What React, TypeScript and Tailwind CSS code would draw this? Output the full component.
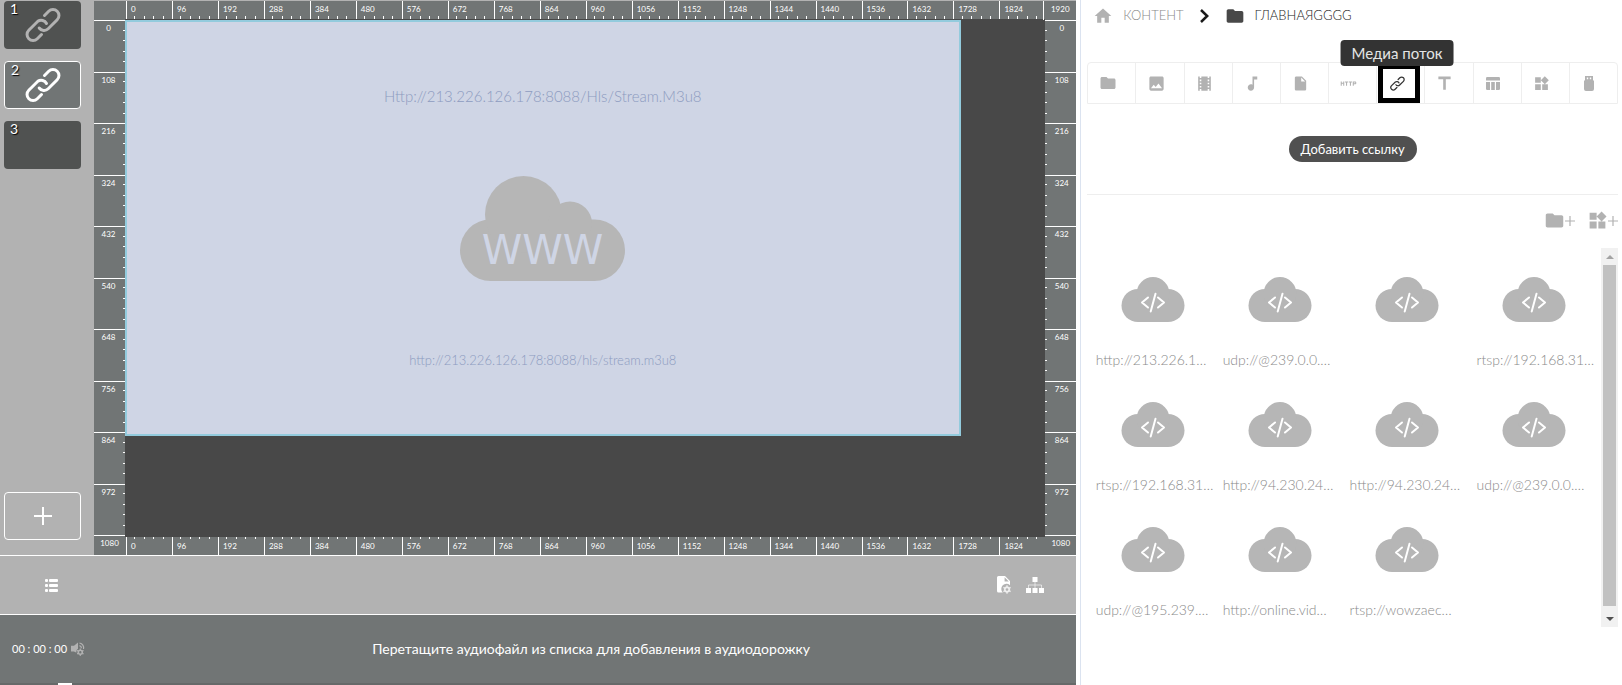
import { useState } from "react";
import type { ReactNode } from "react";
import clsx from "clsx";
import {
  MdFolder,
  MdHome,
  MdHttp,
  MdImage,
  MdInsertDriveFile,
  MdMusicNote,
  MdTheaters,
  MdTitle,
  MdWidgets,
} from "react-icons/md";

const H_MARKS = Array.from({ length: 20 }, (_, i) => i * 96);
const V_MARKS = Array.from({ length: 10 }, (_, i) => i * 108);

const LINKS = [
  "http://213.226.1…",
  "udp://@239.0.0.…",
  "",
  "rtsp://192.168.31…",
  "rtsp://192.168.31…",
  "http://94.230.24…",
  "http://94.230.24…",
  "udp://@239.0.0.…",
  "udp://@195.239.…",
  "http://online.vid…",
  "rtsp://wowzaec…",
];

function ChainIcon({ className }: { className?: string }) {
  return (
    <svg viewBox="0 0 36 36" className={className} fill="none" stroke="currentColor" strokeWidth="3" strokeLinecap="round">
      <path d="M19.5 8.5l4.2-4.2a6 6 0 0 1 8.5 8.5L23.2 21.7a6 6 0 0 1-9-.7" />
      <path d="M16.5 27.5l-4.2 4.2a6 6 0 0 1-8.5-8.5L12.8 14.3a6 6 0 0 1 8.7 2.2" />
    </svg>
  );
}

function TableIcon() {
  return (
    <svg viewBox="0 0 14 13" className="w-3.5" fill="currentColor">
      <path d="M1.2 0h11.6q1.2 0 1.2 1.2V3.6H0V1.2Q0 0 1.2 0z" />
      <path d="M0 5h4v8H1.2Q0 13 0 11.8zM5.2 5h3.6v8H5.2zM10 5h4v6.8q0 1.2-1.2 1.2H10z" />
    </svg>
  );
}

function UsbIcon() {
  return (
    <svg viewBox="0 0 10 15" className="w-2.5" fill="currentColor">
      <path fillRule="evenodd" d="M1 0h8v4.5h1V13q0 2-2 2H2q-2 0-2-2V4.5h1zM2.8 1.5v1.7h1.4V1.5zM5.8 1.5v1.7h1.4V1.5z" />
    </svg>
  );
}

function ListIcon() {
  return (
    <svg viewBox="0 0 13 13" className="w-[13px]" fill="currentColor">
      {[0, 5, 10].map((y) => (
        <g key={y}>
          <rect x="0" y={y} width="3" height="3" rx="1" />
          <rect x="4" y={y} width="9" height="3" rx="1" />
        </g>
      ))}
    </svg>
  );
}

function Gear({ x, y, r }: { x: number; y: number; r: number }) {
  return (
    <g transform={`translate(${x} ${y})`}>
      <circle r={r * 0.62} fill="none" stroke="currentColor" strokeWidth={r * 0.5} />
      {[0, 60, 120, 180, 240, 300].map((a) => (
        <rect key={a} x={-r * 0.2} y={-r * 1.15} width={r * 0.4} height={r * 0.4} fill="currentColor" transform={`rotate(${a})`} />
      ))}
    </g>
  );
}

function FileGearIcon() {
  return (
    <svg viewBox="0 0 15 18" className="w-[15px]">
      <path fill="currentColor" d="M1.5 0H8l5 5v4.2a5 5 0 0 0-7.2 7.3H1.5Q0 16.5 0 15V1.5Q0 0 1.5 0zM7.6 1.3V5.5h4.2z" />
      <g className="opacity-80">
        <Gear x={10} y={13.5} r={3.6} />
      </g>
    </svg>
  );
}

function SitemapIcon() {
  return (
    <svg viewBox="0 0 18 16" className="w-[18px]" fill="currentColor">
      <path d="M6.5 0h5v5h-5zM0 11h5v5H0zM6.5 11h5v5h-5zM13 11h5v5h-5z" />
      <path d="M9 5v6M2.5 11V8h13v3" fill="none" stroke="currentColor" strokeOpacity="0.6" />
    </svg>
  );
}

function VolumeGearIcon() {
  return (
    <svg viewBox="0 0 14 14" className="w-3.5">
      <path fill="currentColor" d="M0 3.8h3L7 0.5v11L3 9.5H0z" />
      <path d="M8.5 1c3 .6 4.6 3 4 6M8.5 3.6c1.5.4 2 1.6 2 2.8" fill="none" stroke="currentColor" strokeWidth="1.2" />
      <circle cx="9.3" cy="10.2" r="4" fill="#717575" />
      <Gear x={9.3} y={10.2} r={3.2} />
    </svg>
  );
}

function CodeCloud() {
  return (
    <svg viewBox="0 0 64 45" className="w-16 text-[#b6b6b6]" fill="currentColor">
      <rect x="0.5" y="12" width="63" height="33" rx="16.5" />
      <circle cx="32" cy="16.5" r="16.4" />
      <path
        d="M27 20.5l-6 5 6 5M37 20.5l6 5-6 5M34.5 16.8L29.7 34.5"
        fill="none"
        stroke="white"
        strokeWidth="2"
        strokeLinecap="round"
        strokeLinejoin="round"
      />
    </svg>
  );
}

function WwwCloud() {
  return (
    <svg viewBox="0 0 165 105" className="w-[165px] shrink-0 text-[#b6b6b6]" fill="currentColor">
      <rect x="0" y="43.5" width="165" height="61.5" rx="30.7" />
      <circle cx="63.5" cy="38.5" r="38.5" />
      <circle cx="110" cy="47.5" r="22" />
      <text x="82.5" y="88" textAnchor="middle" fontSize="41" fill="#cfd5e5" fontFamily="DejaVu Sans, sans-serif">
        WWW
      </text>
    </svg>
  );
}

function HRuler({ flip = false }: { flip?: boolean }) {
  return (
    <div className="flex h-[18px] w-full shrink-0 pl-px">
      {H_MARKS.map((m) => (
        <div
          key={m}
          className={clsx("flex min-w-0 flex-1 border-l border-white", flip ? "flex-col-reverse justify-end" : "flex-col justify-between")}
        >
          <span className={clsx("pl-1 text-[8px]", flip ? "leading-[12px]" : "pt-px leading-[14px]")}>{m}</span>
          <div className="-ml-px flex h-[3px] shrink-0">
            {[0, 1, 2, 3, 4].map((t) => (
              <i key={t} className={clsx("flex-1", t > 0 && "border-l border-white", flip && "mb-px")} />
            ))}
          </div>
        </div>
      ))}
    </div>
  );
}

function VRuler({ flip = false }: { flip?: boolean }) {
  return (
    <div className="flex w-[31px] shrink-0 flex-col bg-[#717575] text-center text-[8px]">
      <div className={clsx("h-[19px] shrink-0 leading-[17px]", flip && "-ml-0.5 border-l border-white")}>{flip && 1920}</div>
      {V_MARKS.map((m) => (
        <div key={m} className={clsx("flex min-h-0 flex-1 border-t border-white", flip && "flex-row-reverse")}>
          <span className="flex-1 leading-[14px]">{m}</span>
          <div className="-mt-px flex w-0.5 flex-col">
            {[0, 1, 2, 3, 4].map((t) => (
              <i key={t} className={clsx("flex-1", t > 0 && "border-t border-white")} />
            ))}
          </div>
        </div>
      ))}
      <div className="h-5 shrink-0 border-t border-white leading-[14px]">1080</div>
    </div>
  );
}

function Slides() {
  const [active, setActive] = useState(2);
  return (
    <aside className="flex w-[94px] shrink-0 flex-col gap-3 pt-px pb-[15px] pl-1">
      {[1, 2, 3].map((n) => (
        <button
          key={n}
          type="button"
          onClick={() => setActive(n)}
          className={clsx(
            "relative flex h-12 w-[77px] items-center justify-center rounded",
            n === active ? "border border-white bg-[#717575] text-white" : "bg-[#505251] text-[#b2b2b2]"
          )}
        >
          <span className="absolute top-0 left-1.5 text-sm leading-4 text-white [text-shadow:1px_1px_1px_black]">{n}</span>
          {n < 3 && <ChainIcon className="size-9" />}
        </button>
      ))}
      <button
        type="button"
        aria-label="Добавить слайд"
        className="mt-auto flex h-12 w-[77px] items-center justify-center rounded border border-white"
      >
        <svg viewBox="0 0 18 18" className="size-[18px]" stroke="white" strokeWidth="2">
          <path d="M9 0v18M0 9h18" />
        </svg>
      </button>
    </aside>
  );
}

function Workspace() {
  return (
    <div className="flex min-w-0 flex-1 pt-px text-white">
      <VRuler />
      <div className="flex min-w-0 flex-1 flex-col bg-[#717575]">
        <HRuler />
        <div className="min-h-0 flex-1 bg-[#484848] pt-px">
          <div className="flex h-[80.5%] w-[90.8%] flex-col items-center justify-between border-2 border-[#93cbdd] bg-[#cfd5e5] py-16 text-[#8d9bc0]">
            <p className="text-[15px] leading-5 font-light">Http://213.226.126.178:8088/Hls/Stream.M3u8</p>
            <WwwCloud />
            <p className="text-[13px] leading-5 font-light">http://213.226.126.178:8088/hls/stream.m3u8</p>
          </div>
        </div>
        <HRuler flip />
      </div>
      <VRuler flip />
    </div>
  );
}

const TOOLS: { name: string; icon: ReactNode }[] = [
  { name: "Папки", icon: <MdFolder className="size-[18px]" /> },
  { name: "Изображения", icon: <MdImage className="size-[19px]" /> },
  { name: "Видео", icon: <MdTheaters className="size-[19px]" /> },
  { name: "Аудио", icon: <MdMusicNote className="size-[19px]" /> },
  { name: "Документы", icon: <MdInsertDriveFile className="size-[17px]" /> },
  { name: "HTTP", icon: <MdHttp className="size-[17px]" /> },
  { name: "Медиа поток", icon: <ChainIcon className="size-[15px]" /> },
  { name: "Текст", icon: <MdTitle className="size-[21px]" /> },
  { name: "Таблица", icon: <TableIcon /> },
  { name: "Виджеты", icon: <MdWidgets className="size-[17px]" /> },
  { name: "USB", icon: <UsbIcon /> },
];

function ContentPanel() {
  const [tool, setTool] = useState(6);
  return (
    <section className="w-[33.4%] shrink-0 border-l border-[#dbe3f0] bg-white pr-1 pl-1.5 text-[#b2b2b2]">
      <nav className="flex h-[31px] items-center text-[13px] font-light">
        <a href="#root" className="flex items-center gap-2.5 pl-1.5">
          <MdHome className="size-5" />
          <span className="text-[#8a8a8a]">КОНТЕНТ</span>
        </a>
        <svg viewBox="0 0 9 14" className="mx-4 w-[9px]" fill="none" stroke="#1a1a1a" strokeWidth="2.5">
          <path d="M1 1l6.2 6L1 13" />
        </svg>
        <a href="#main" className="flex items-center gap-2.5 text-[#484848]">
          <MdFolder className="size-5" />
          <span className="text-[#222222]">ГЛАВНАЯGGGG</span>
        </a>
      </nav>

      <ul className="mt-[31px] flex h-[42px] rounded-t border border-[#eeeeee]">
        {TOOLS.map((t, i) => (
          <li key={t.name} className={clsx("relative flex-1", i > 0 && "border-l border-[#eeeeee]")}>
            <button
              type="button"
              aria-label={t.name}
              onClick={() => setTool(i)}
              className={clsx(
                "flex items-center justify-center",
                i === tool ? "mt-px ml-px h-[39px] w-[42px] border-[5px] border-black pr-1 text-[#333333]" : "size-full pr-2"
              )}
            >
              {t.icon}
            </button>
            {i === tool && (
              <span className="absolute -top-[23px] left-[42%] z-10 -translate-x-1/2 rounded bg-[#333333] px-[11px] text-[15px] leading-[26px] whitespace-nowrap text-[#e5e5e5]">
                {t.name}
              </span>
            )}
          </li>
        ))}
      </ul>

      <div className="flex justify-center border-b border-[#eeeeee] py-8">
        <button type="button" className="rounded-full bg-[#505050] px-3 text-[13px] leading-[26px] text-white">
          Добавить ссылку
        </button>
      </div>

      <div className="flex h-[53px] items-center justify-end gap-3 pb-0.5">
        <button type="button" aria-label="Новая папка" className="flex items-center">
          <MdFolder className="size-[21px]" />
          <PlusMark />
        </button>
        <button type="button" aria-label="Новый виджет" className="flex items-center">
          <MdWidgets className="size-[21px]" />
          <PlusMark />
        </button>
      </div>

      <div className="flex h-[379px]">
        <div className="grid flex-1 auto-rows-[125px] grid-cols-4 overflow-hidden pr-1 pl-0.5">
          {LINKS.map((link, i) => (
            <a key={i} href="#link" className="flex min-w-0 flex-col items-center pt-[29px]">
              <CodeCloud />
              <span className="mt-7 w-[114px] text-sm leading-5 font-light whitespace-nowrap text-[#8a8a8a]">{link}</span>
            </a>
          ))}
        </div>
        <div className="flex w-[17px] flex-col items-center bg-[#f1f1f1]">
          <button type="button" aria-label="Вверх" className="flex h-[17px] w-full items-center justify-center">
            <svg viewBox="0 0 8 4" className="w-2" fill="#a3a3a3">
              <path d="M0 4l4-4 4 4z" />
            </svg>
          </button>
          <div className="mb-1 w-[13px] flex-1 bg-[#c1c1c1]" />
          <button type="button" aria-label="Вниз" className="flex h-[17px] w-full items-center justify-center">
            <svg viewBox="0 0 8 4" className="w-2" fill="#505050">
              <path d="M0 0l4 4 4-4z" />
            </svg>
          </button>
        </div>
      </div>
    </section>
  );
}

function PlusMark() {
  return (
    <svg viewBox="0 0 10 10" className="w-2.5" stroke="currentColor" strokeWidth="1.2">
      <path d="M5 0v10M0 5h10" />
    </svg>
  );
}

export default function App() {
  return (
    <div className="flex h-screen overflow-hidden bg-white font-[Lato,'Open_Sans',sans-serif]">
      <main className="mr-1 flex min-w-0 flex-1 flex-col bg-[#b2b2b2]">
        <div className="flex min-h-0 flex-1">
          <Slides />
          <Workspace />
        </div>

        <div className="flex h-[60px] shrink-0 items-center border-y border-white pr-8 pl-[45px] text-white">
          <button type="button" aria-label="Список">
            <ListIcon />
          </button>
          <button type="button" aria-label="Настройки файла" className="ml-auto">
            <FileGearIcon />
          </button>
          <button type="button" aria-label="Структура" className="ml-3.5">
            <SitemapIcon />
          </button>
        </div>

        <div className="flex h-[70px] shrink-0 flex-col bg-[#717575] text-white">
          <div className="flex flex-1 items-center pl-3">
            <div className="flex w-[106px] items-center gap-1 text-[11px]">
              00 : 00 : 00
              <button type="button" aria-label="Громкость" className="text-[#b2b2b2]">
                <VolumeGearIcon />
              </button>
            </div>
            <p className="flex-1 pr-3 text-center text-sm">Перетащите аудиофайл из списка для добавления в аудиодорожку</p>
          </div>
          <div className="h-0.5 bg-[#666969] pl-[58px]">
            <div className="h-full w-3.5 bg-white" />
          </div>
        </div>
      </main>
      <ContentPanel />
    </div>
  );
}
